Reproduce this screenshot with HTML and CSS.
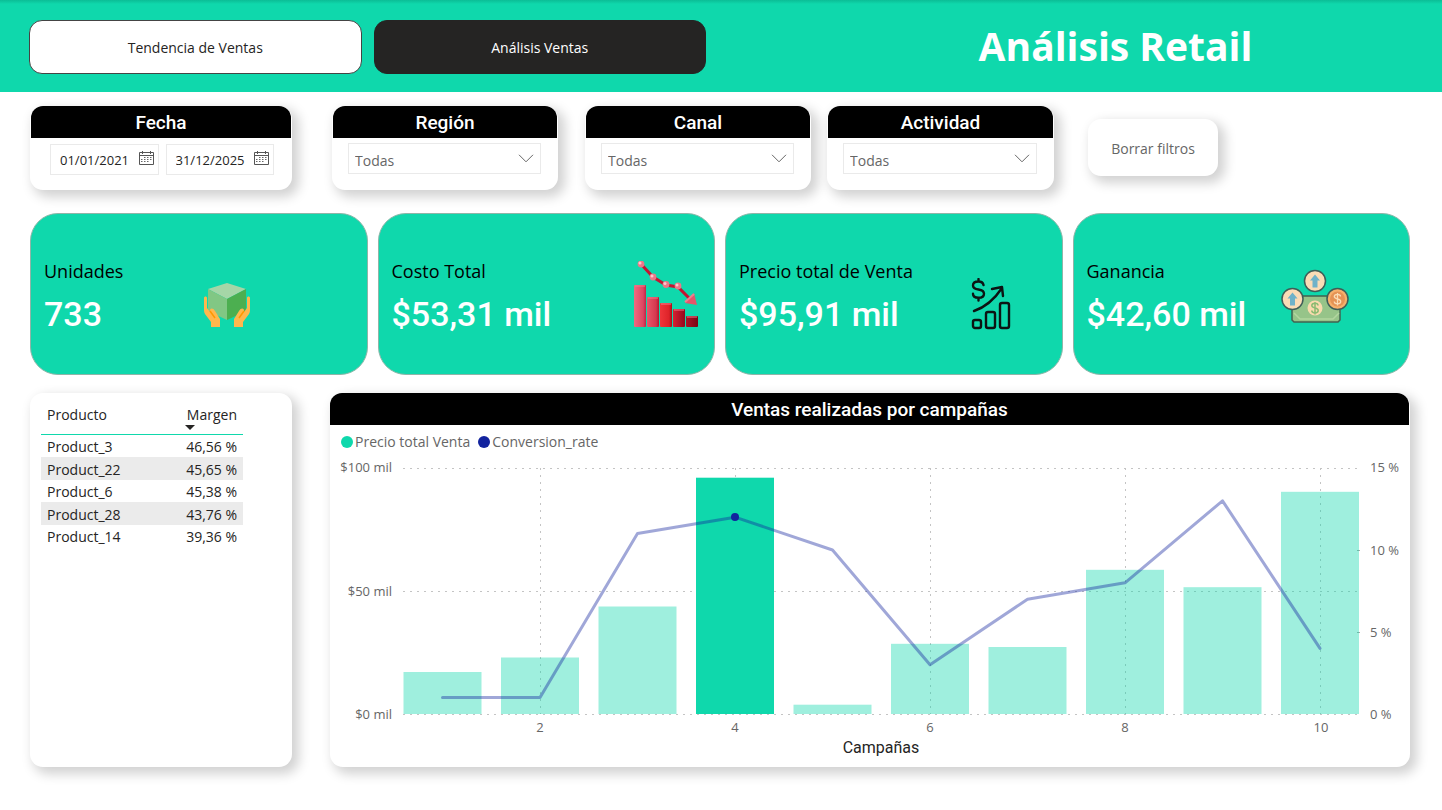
FILE: index.html
```
<!DOCTYPE html>
<html lang="es">
<head>
<meta charset="utf-8">
<meta name="viewport" content="width=device-width, initial-scale=1">
<title>Análisis Retail</title>
<link rel="stylesheet" href="styles.css">
</head>
<body>
<header class="topbar">
  <nav class="tabs">
    <button type="button" class="tab">Tendencia de Ventas</button>
    <button type="button" class="tab tab-active" aria-current="page">Análisis Ventas</button>
  </nav>
  <h1 class="title">Análisis Retail</h1>
</header>
<main class="page">
  <section class="filters">
    <div class="card filter filter-date">
      <h2 class="card-head">Fecha</h2>
      <div class="dates">
        <div class="date">
          <input class="date-input" type="text" aria-label="Fecha inicial" value="01/01/2021">
          <svg class="date-icon" viewBox="0 0 15 14"><path d="M.5 1.5h14v12H.5zM.5 4.5h14M3.5 0v3M11.5 0v3" fill="none" stroke="#555"/><path d="M5 6.500h8M2 8.500h11M2 10.500h9" stroke="#666" stroke-dasharray="1.500 1.500" fill="none"/></svg>
        </div>
        <div class="date">
          <input class="date-input" type="text" aria-label="Fecha final" value="31/12/2025">
          <svg class="date-icon" viewBox="0 0 15 14"><path d="M.5 1.5h14v12H.5zM.5 4.5h14M3.5 0v3M11.5 0v3" fill="none" stroke="#555"/><path d="M5 6.500h8M2 8.500h11M2 10.500h9" stroke="#666" stroke-dasharray="1.500 1.500" fill="none"/></svg>
        </div>
      </div>
    </div>
    <div class="card filter filter-region">
      <h2 class="card-head"><label for="region">Región</label></h2>
      <div class="drop"><select id="region" class="select"><option>Todas</option></select><svg class="chevron" viewBox="0 0 16 9"><path d="M1 .8l7 7 7-7" fill="none" stroke="#666"/></svg></div>
    </div>
    <div class="card filter filter-canal">
      <h2 class="card-head"><label for="canal">Canal</label></h2>
      <div class="drop"><select id="canal" class="select"><option>Todas</option></select><svg class="chevron" viewBox="0 0 16 9"><path d="M1 .8l7 7 7-7" fill="none" stroke="#666"/></svg></div>
    </div>
    <div class="card filter filter-actividad">
      <h2 class="card-head"><label for="actividad">Actividad</label></h2>
      <div class="drop"><select id="actividad" class="select"><option>Todas</option></select><svg class="chevron" viewBox="0 0 16 9"><path d="M1 .8l7 7 7-7" fill="none" stroke="#666"/></svg></div>
    </div>
    <button type="button" class="card clear">Borrar filtros</button>
  </section>

  <section class="kpis">
    <article class="kpi kpi-units">
      <div class="kpi-text"><h3 class="kpi-label">Unidades</h3><p class="kpi-value">733</p></div>
      <svg class="kpi-icon icon-units" viewBox="0 0 46 44">
        <path d="M4 6L23 0l19 6-19 10z" fill="#a5d6a7"/><path d="M4 6l19 10v21L4 28z" fill="#81c784"/><path d="M42 6L23 16v21l19-9z" fill="#4caf50"/>
        <path d="M0 15c0-2 3-2 3 0v10l3 4c-1-4 3-5 5-1l5 8v8H7v-5L1 31C0 29 0 28 0 26zM46 15c0-2-3-2-3 0v10l-3 4c1-4-3-5-5-1l-5 8v8h9v-5l6-8c1-2 1-3 1-5z" fill="#ffb74d"/>
        <path d="M6 28l5 7M40 28l-5 7" stroke="#ff9800" stroke-width="1.500"/>
      </svg>
    </article>
    <article class="kpi kpi-cost">
      <div class="kpi-text"><h3 class="kpi-label">Costo Total</h3><p class="kpi-value">$53,31 mil</p></div>
      <svg class="kpi-icon icon-cost" viewBox="0 0 64 66">
        <defs>
          <linearGradient id="b1"><stop offset="0" stop-color="#ef6a80"/><stop offset=".75" stop-color="#dd4762"/><stop offset="1" stop-color="#c32346"/></linearGradient>
          <linearGradient id="b2"><stop offset="0" stop-color="#e8576b"/><stop offset=".75" stop-color="#d5384f"/><stop offset="1" stop-color="#b41632"/></linearGradient>
          <linearGradient id="b3"><stop offset="0" stop-color="#ef353a"/><stop offset=".75" stop-color="#de2329"/><stop offset="1" stop-color="#a90c18"/></linearGradient>
          <linearGradient id="b4"><stop offset="0" stop-color="#d82131"/><stop offset="1" stop-color="#93091d"/></linearGradient>
          <linearGradient id="b5"><stop offset="0" stop-color="#ac1528"/><stop offset="1" stop-color="#780513"/></linearGradient>
        </defs>
        <rect x="0" y="24" width="12" height="42" rx="1" fill="url(#b1)"/><rect x="13" y="36" width="12" height="30" rx="1" fill="url(#b2)"/><rect x="26" y="42" width="12" height="24" rx="1" fill="url(#b3)"/><rect x="39" y="48" width="12" height="18" rx="1" fill="url(#b4)"/><rect x="52" y="55" width="12" height="11" rx="1" fill="url(#b5)"/>
        <path d="M1 25h10M14 37h10M27 43h10M40 49h10M53 56h10" stroke="#f4798a" stroke-width="1"/>
        <path d="M7 3l12 13 13 8 12 2 13 13" fill="none" stroke="#c41531" stroke-width="3"/>
        <path d="M60 32l3 12-12-2z" fill="#e4556a"/><path d="M60 33L51 41" stroke="#ed8190" stroke-width="2"/>
        <g fill="#ed7788"><circle cx="7" cy="3" r="3.400"/><circle cx="19" cy="16" r="3.400"/><circle cx="32" cy="23.500" r="3.400"/><circle cx="44" cy="25" r="3.400"/></g>
        <g fill="#ffc5cc"><circle cx="6" cy="2" r="1.500"/><circle cx="18" cy="15" r="1.500"/><circle cx="31" cy="22.500" r="1.500"/><circle cx="43" cy="24" r="1.500"/></g>
      </svg>
    </article>
    <article class="kpi kpi-price">
      <div class="kpi-text"><h3 class="kpi-label">Precio total de Venta</h3><p class="kpi-value">$95,91 mil</p></div>
      <svg class="kpi-icon icon-price" viewBox="0 0 40 52">
        <g fill="none" stroke="#0c1413" stroke-width="2.400" stroke-linecap="round" stroke-linejoin="round">
          <rect x="2" y="42" width="8" height="8" rx="2"/><rect x="15" y="34" width="9" height="16" rx="2"/><rect x="29" y="25" width="9" height="25" rx="2"/>
          <path d="M3 33c12-4 20-11 28-23M21 11l10-2 1 9"/>
          <path d="M12.500 7C12 4.500 10 3.500 7.500 3.500 4 3.500 2 5 2 7.500s2 3.500 5.500 4S13 13 13 15.800s-2.500 4-5.500 4S2 18.500 2 15.800M7.500 1v2.500M7.500 20v2.500"/>
        </g>
      </svg>
    </article>
    <article class="kpi kpi-profit">
      <div class="kpi-text"><h3 class="kpi-label">Ganancia</h3><p class="kpi-value">$42,60 mil</p></div>
      <svg class="kpi-icon icon-profit" viewBox="0 0 68 54">
        <path d="M11 27h48v24l-2 2H13l-2-2z" fill="#96c489" stroke="#42614f" stroke-width="1.500"/>
        <path d="M13 44l6 6h33l6-6" fill="none" stroke="#b2d69f" stroke-width="1.500"/>
        <circle cx="34" cy="39" r="7.500" fill="#f9dbad"/>
        <g stroke="#3f5d58" stroke-width="1.500"><circle cx="34" cy="12" r="10.500" fill="#fbdcb6"/><circle cx="11.500" cy="30" r="10.500" fill="#fbdcb6"/><circle cx="56.500" cy="30" r="10.500" fill="#f6b06c"/></g>
        <circle cx="56.500" cy="30" r="7.500" fill="#e59355"/>
        <path d="M34 5.500l5 6h-2.500v7h-5v-7H29zM11.500 23.500l5 6H14v7H9v-7H6.500z" fill="#6fb2c9"/>
        <path d="M37 36.500c0-1.400-1-2.200-3-2.200s-3.200.8-3.200 2.300c0 3.200 6.400 1.600 6.400 4.800 0 1.600-1.200 2.400-3.200 2.400s-3.200-.9-3.200-2.400M34 33v12.500" fill="none" stroke="#8abb72" stroke-width="1.500"/>
        <path d="M59.500 27.500c0-1.400-1-2.200-3-2.200s-3.200.8-3.200 2.300c0 3.200 6.400 1.600 6.400 4.800 0 1.600-1.200 2.400-3.200 2.400s-3.200-.9-3.200-2.400M56.500 24v12.500" fill="none" stroke="#fbdcb6" stroke-width="1.300"/>
      </svg>
    </article>
  </section>

  <section class="details">
    <div class="card table-card">
      <table class="table">
        <thead><tr><th>Producto</th><th class="num sorted" aria-sort="descending">Margen</th></tr></thead>
        <tbody>
          <tr><td>Product_3</td><td class="num">46,56 %</td></tr>
          <tr><td>Product_22</td><td class="num">45,65 %</td></tr>
          <tr><td>Product_6</td><td class="num">45,38 %</td></tr>
          <tr><td>Product_28</td><td class="num">43,76 %</td></tr>
          <tr><td>Product_14</td><td class="num">39,36 %</td></tr>
        </tbody>
      </table>
    </div>
    <div class="card chart-card">
      <h2 class="card-head chart-head">Ventas realizadas por campañas</h2>
      <ul class="legend">
        <li class="legend-item"><span class="dot dot-sales"></span>Precio total Venta</li>
        <li class="legend-item"><span class="dot dot-rate"></span>Conversion_rate</li>
      </ul>
      <svg class="chart" viewBox="0 0 1080 312" role="img" aria-label="Ventas realizadas por campañas">
        <g class="grid">
          <path d="M73 13.500H1030M73 136.500H1030M73 259.500H1030"/>
          <path d="M210.500 13V259M405.500 13V259M600.500 13V259M795.500 13V259M990.500 13V259"/>
        </g>
        <path class="ticks" d="M1027 95.500h3M1027 177.500h3"/>
        <g class="bars">
          <rect x="73.500" y="217" width="78" height="42"/>
          <rect x="171" y="202.500" width="78" height="56.500"/>
          <rect x="268.500" y="151.500" width="78" height="107.500"/>
          <rect class="bar-on" x="366" y="22.700" width="78" height="236.300"/>
          <rect x="463.500" y="249.700" width="78" height="9.300"/>
          <rect x="561" y="188.800" width="78" height="70.200"/>
          <rect x="658.500" y="192" width="78" height="67"/>
          <rect x="756" y="114.800" width="78" height="144.200"/>
          <rect x="853.500" y="132.200" width="78" height="126.800"/>
          <rect x="951" y="36.800" width="78" height="222.200"/>
        </g>
        <polyline class="rate" points="112.500,242.600 210,242.600 307.500,78.600 405,62.200 502.500,95 600,209.800 697.500,144.200 795,127.800 892.500,45.800 990,193.400"/>
        <circle class="rate-dot" cx="405" cy="62" r="4"/>
        <g class="axis axis-left"><text x="62" y="17">$100 mil</text><text x="62" y="141">$50 mil</text><text x="62" y="264">$0 mil</text></g>
        <g class="axis"><text x="1040" y="17">15 %</text><text x="1040" y="100">10 %</text><text x="1040" y="182">5 %</text><text x="1040" y="264">0 %</text></g>
        <g class="axis axis-bottom"><text x="210" y="277">2</text><text x="405" y="277">4</text><text x="600" y="277">6</text><text x="795" y="277">8</text><text x="991" y="277">10</text></g>
        <text class="axis-title" x="551" y="298">Campañas</text>
      </svg>
    </div>
  </section>
</main>
</body>
</html>
```
FILE: styles.css
```
* { box-sizing: border-box; }
body { margin: 0; background: #fff; color: #252423; font-family: "Open Sans", "Noto Sans", sans-serif; font-size: 14px; }
h1, h2, h3, p, ul { margin: 0; padding: 0; font-weight: 400; }
button, input, select { font: inherit; color: inherit; }

.topbar { display: grid; grid-template-columns: 677fr 593fr; gap: 113px; align-items: center; height: 92px; padding: 0 30px 0 29px; background: linear-gradient(#0bbd96, #0fd8ac 4px); }
.tabs { display: grid; grid-template-columns: 1fr 1fr; gap: 12px; margin-top: 2px; }
.tab { height: 54px; border: 1px solid #444; border-radius: 13px; background: #fff; cursor: pointer; }
.tab-active { border-color: #252423; background: #252423; color: #fff; }
.title { color: #fff; font-size: 39px; font-weight: 700; line-height: 48px; text-align: center; }

.page { padding: 14px 32px 42px 30px; }
.card { border: 0; border-radius: 13px; background: #fff; box-shadow: 5px 5px 12px 2px rgba(0, 0, 0, .18); }
.card-head { margin: 0 1px; height: 32px; border-radius: 12px 12px 0 0; background: #000; color: #fff; font-family: Roboto, sans-serif; font-size: 19px; font-weight: 500; line-height: 34px; text-align: center; }

.filters { display: grid; grid-template-columns: 262fr 40fr 226fr 27fr 226fr 16fr 227fr 34fr 130fr 192fr; align-items: start; }
.filter { height: 84px; }
.filter-date { grid-column: 1; }
.filter-region { grid-column: 3; }
.filter-canal { grid-column: 5; }
.filter-actividad { grid-column: 7; }
.clear { grid-column: 9; height: 57px; margin-top: 13px; padding: 2px 0 0; color: #666; cursor: pointer; }
.dates { display: grid; grid-template-columns: 1fr 1fr; gap: 7px; padding: 6px 18px 0 20px; }
.date { display: flex; align-items: center; height: 31px; padding: 0 4px 0 9px; border: 1px solid #eaeaea; }
.date-input { flex: 1; width: 0; padding: 0; border: 0; background: none; font-size: 13px; }
.date-icon { width: 15px; height: 14px; margin-bottom: 3px; }
.drop { display: flex; align-items: center; height: 31px; margin: 5px 17px 0 16px; border: 1px solid #eaeaea; }
.select { flex: 1; width: 100%; height: 29px; margin-right: -22px; padding: 3px 22px 0 6px; border: 0; background: none; color: #666; appearance: none; }
.chevron { flex: none; width: 16px; height: 9px; margin-right: 6px; pointer-events: none; }

.kpis { display: grid; grid-template-columns: repeat(4, 1fr); gap: 10px; margin-top: 23px; }
.kpi { display: flex; align-items: center; justify-content: space-between; height: 162px; padding-left: 13px; border: 1px solid #8fb5a8; border-radius: 28px; background: #0fd8ac; }
.kpi-units { padding-right: 117px; }
.kpi-cost { padding-right: 16px; }
.kpi-price { padding-right: 51px; }
.kpi-profit { padding-right: 60px; }
.kpi-label { color: #000; font-size: 18px; line-height: 28px; }
.kpi-value { margin-top: 8px; color: #fff; font-family: Roboto, sans-serif; font-size: 34px; font-weight: 500; line-height: 42px; }
.kpi-text { padding-top: 4px; }
.kpi-icon { flex: none; }
.icon-units { width: 46px; height: 44px; margin-top: 22px; }
.icon-cost { width: 64px; height: 66px; }
.icon-price { width: 40px; height: 52px; margin-top: 20px; }
.icon-profit { width: 68px; height: 56px; margin-top: 4px; }

.details { display: grid; grid-template-columns: 262fr 1080fr; gap: 38px; margin-top: 18px; }
.table-card { padding: 11px 49px 12px 11px; }
.table { width: 100%; border-collapse: separate; border-spacing: 0; }
.table th { height: 31px; padding: 1px 6px 9px; border-bottom: 1px solid #0fd8ac; font-weight: 400; line-height: 20px; text-align: left; }
.table td { height: 22px; padding: 1px 6px 0; line-height: 21px; }
.table tbody tr:nth-child(even) { background: #ebebeb; }
.table tbody tr:nth-child(even) td { height: 23px; }
.table .num { text-align: right; }
.table .sorted { position: relative; }
.sorted::after { content: ""; position: absolute; right: 48px; bottom: 4px; border: 5px solid transparent; border-top-color: #252423; border-bottom: 0; }
.chart-head { margin-right: 1px; margin-left: 0; }
.legend { display: flex; gap: 8px; padding: 7px 11px 0; color: #666; line-height: 20px; list-style: none; }
.legend-item { display: flex; align-items: center; gap: 2px; }
.dot { width: 12px; height: 12px; border-radius: 50%; }
.dot-sales { background: #0fd8ac; }
.dot-rate { background: #12239e; }
.chart { display: block; width: 100%; margin-top: 3px; }
.grid { fill: none; stroke: #c4c4c4; stroke-dasharray: 2 5; }
.ticks { stroke: #aaa; }
.bars { fill: #0fd8ac; fill-opacity: .4; }
.bar-on { fill-opacity: 1; }
.rate { fill: none; stroke: #12239e; stroke-opacity: .4; stroke-width: 3; stroke-linecap: round; stroke-linejoin: round; }
.rate-dot { fill: #12239e; }
.axis { fill: #666; font-size: 13px; }
.axis-left { text-anchor: end; }
.axis-bottom, .axis-title { text-anchor: middle; }
.axis-title { fill: #252423; font-family: Roboto, sans-serif; font-size: 16px; }
```
